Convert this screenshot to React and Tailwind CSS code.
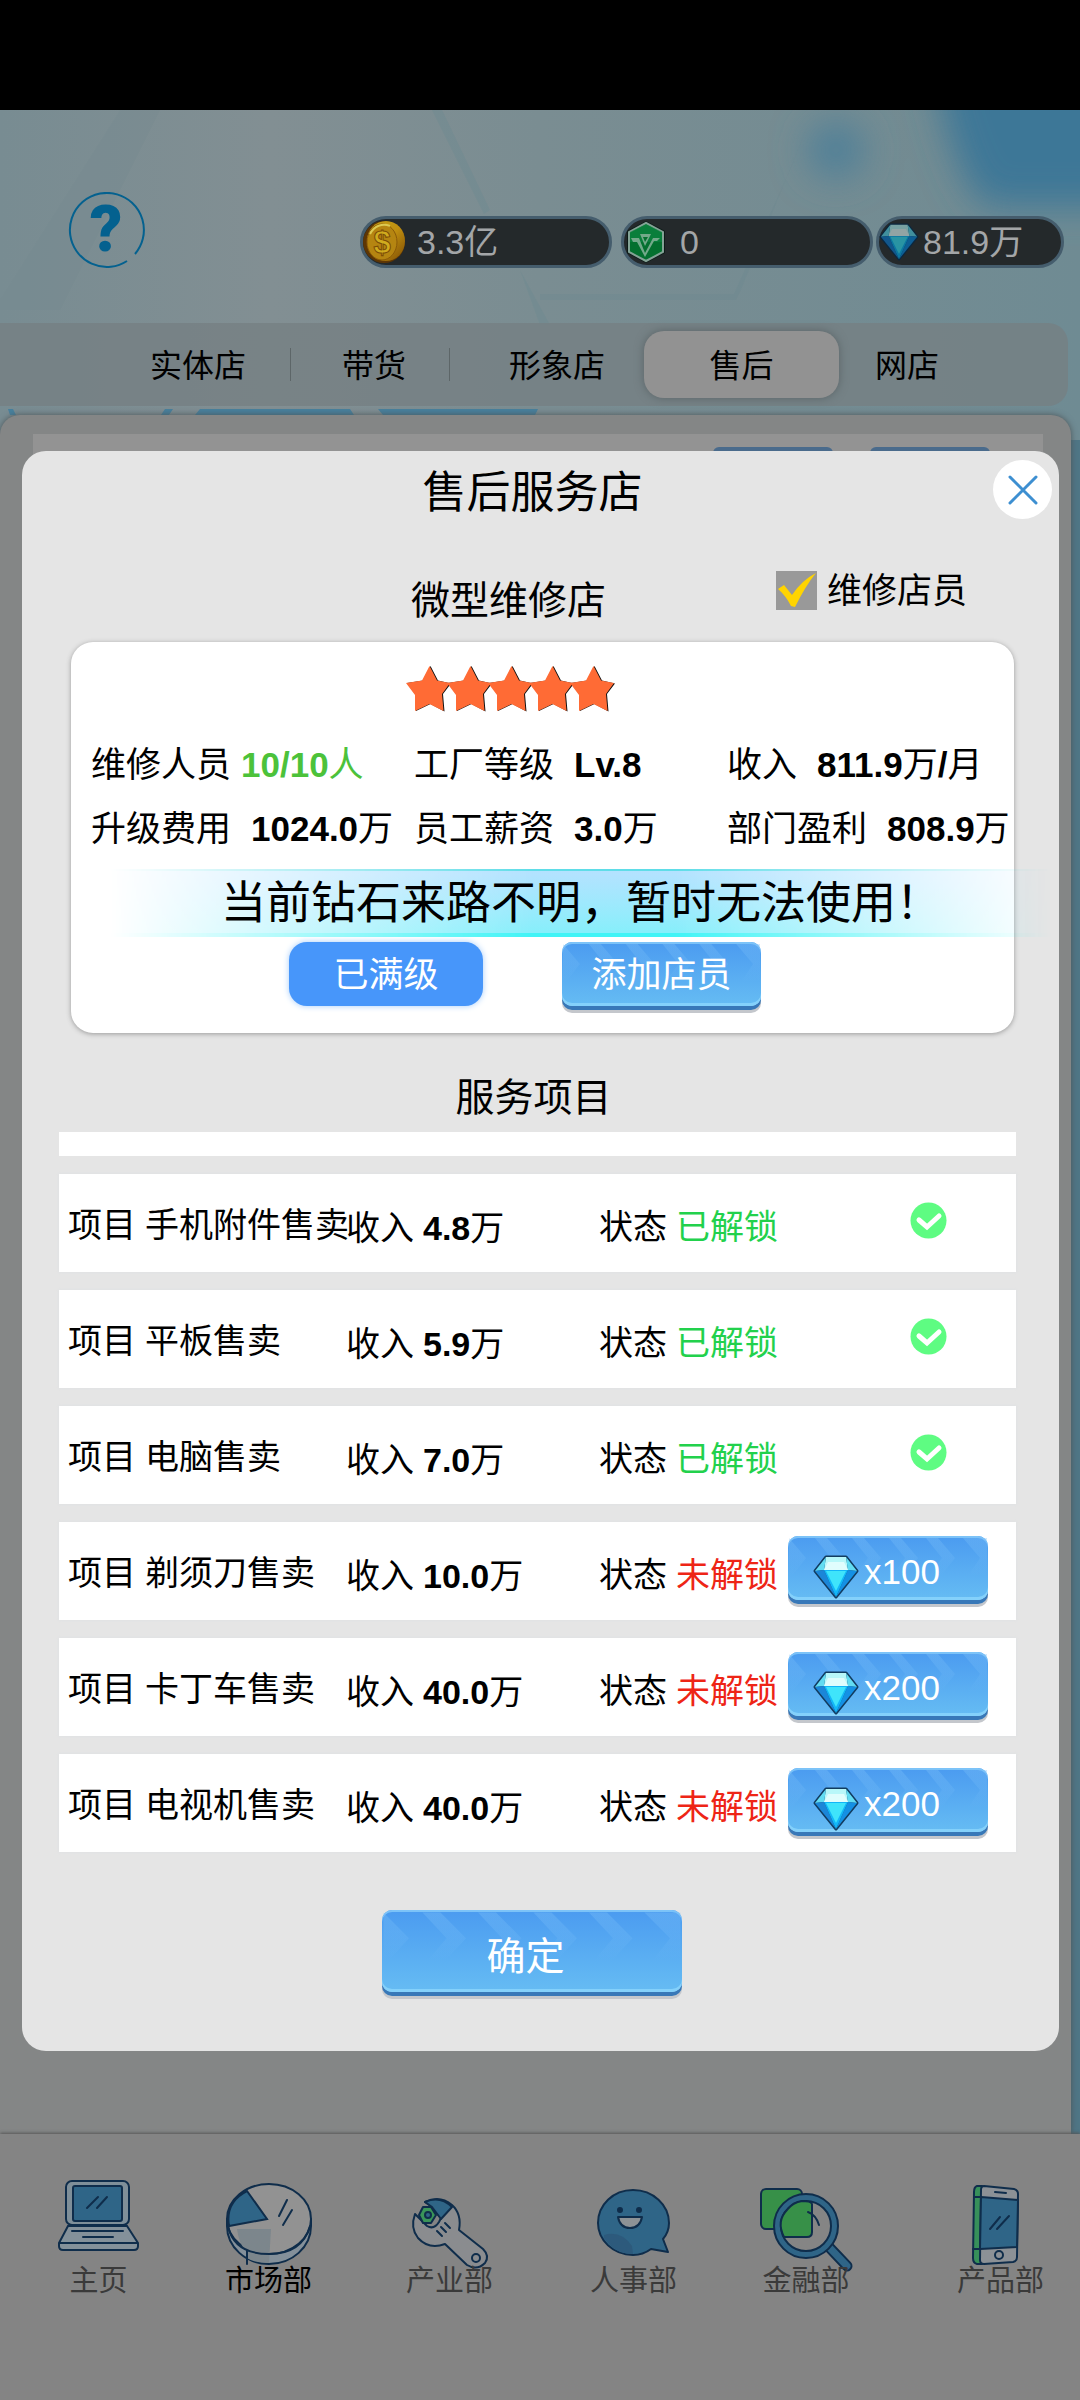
import React, { useState } from 'react'
import clsx from 'clsx'

const tabs = ['实体店', '带货', '形象店', '售后', '网店']

const stats = [
  { label: '维修人员', value: '10/10人', highlight: true },
  { label: '工厂等级', value: 'Lv.8' },
  { label: '收入', value: '811.9万/月' },
  { label: '升级费用', value: '1024.0万' },
  { label: '员工薪资', value: '3.0万' },
  { label: '部门盈利', value: '808.9万' },
]

const projects = [
  { name: '手机附件售卖', income: '4.8万', unlocked: true },
  { name: '平板售卖', income: '5.9万', unlocked: true },
  { name: '电脑售卖', income: '7.0万', unlocked: true },
  { name: '剃须刀售卖', income: '10.0万', cost: 100 },
  { name: '卡丁车售卖', income: '40.0万', cost: 200 },
  { name: '电视机售卖', income: '40.0万', cost: 200 },
]

// Only digits and latin letters are bold, the units stay regular
function Value({ text }) {
  return (
    <span>
      {text.split(/([\w./]+)/).map((part, i) => (
        <span key={i} className={i % 2 ? 'font-bold' : ''}>{part}</span>
      ))}
    </span>
  )
}

function CoinIcon() {
  return (
    <svg className="w-11 h-11 shrink-0" viewBox="0 0 44 44" aria-hidden="true">
      <defs>
        <linearGradient id="coin" x1="0" y1="0" x2="1" y2="1">
          <stop offset="0" stopColor="#c4a416" />
          <stop offset="0.5" stopColor="#c08f10" />
          <stop offset="1" stopColor="#7f4e04" />
        </linearGradient>
      </defs>
      <circle cx="21" cy="22" r="21" fill="#5e3604" />
      <ellipse cx="23" cy="21" rx="19" ry="20" fill="url(#coin)" />
      <ellipse cx="19" cy="22" rx="15" ry="18" fill="#b58511" stroke="#8a5a08" strokeWidth="1" />
      <path d="M7 14 A16 18 0 0 1 27 6" fill="none" stroke="#dcca52" strokeWidth="2" />
      <text x="19" y="33" textAnchor="middle" fontSize="31" fontWeight="bold" fill="#d0ab1e" stroke="#7c4c06" strokeWidth="1">$</text>
    </svg>
  )
}

function BadgeIcon() {
  return (
    <svg className="w-11 h-11 shrink-0" viewBox="0 0 44 44" aria-hidden="true">
      <path d="M22 1 L41 11 V33 L22 43 L3 33 V11 Z" fill="#0d1b18" />
      <path d="M22 3 L39 12 V32 L22 41 L5 32 V12 Z" fill="#04702f" stroke="#84a396" strokeWidth="2" />
      <path d="M22 4 L38 12 V22 H6 V12 Z" fill="#0b8440" opacity="0.7" />
      <path d="M7 18 H15 L21 33 L29 18 H36 L33 21 H30 L21 37 L13 22 H9 Z M16 14 H27 L21 26 Z" fill="#73a98a" />
      <path d="M19 17 H24 L21 22 Z" fill="#04702f" />
    </svg>
  )
}

function DiamondIcon({ className }) {
  return (
    <svg className={clsx('shrink-0 overflow-visible', className)} viewBox="0 0 44 44" aria-hidden="true">
      <path d="M12 2 H32 L43 16 L22 42 L1 16 Z" fill="#0a4a78" stroke="#123c60" strokeWidth="3" strokeLinejoin="round" />
      <path d="M12 2 H32 L34 15 H10 Z" fill="#b8f7f9" />
      <path d="M12 2 L10 15 L1 16 Z M32 2 L34 15 L43 16 Z" fill="#62dcf2" />
      <path d="M1 16 L10 15 L22 42 Z" fill="#1b86d8" />
      <path d="M43 16 L34 15 L22 42 Z" fill="#1590e4" />
      <path d="M10 15 H34 L22 42 Z" fill="#12b6f8" />
      <path d="M12 16 H32 L22 36 Z" fill="#3fe4fb" />
      <path d="M10 15 L14 7 H30 L34 15 Z" fill="#e0fdfd" />
    </svg>
  )
}

function Star() {
  return (
    <svg className="w-[41px] h-[45px] overflow-visible" viewBox="0 0 41 45" aria-hidden="true">
      <path d="M24.5 0 L32 14.5 L45 17.5 L37 28 L38.5 45.5 L24.5 38 L10 45 V29 L1 17 L17 14.5 Z" fill="#111" />
      <path d="M23.5 0 L31 14.5 L44 17 L36 28 L37.5 45 L23.5 38 L9 45 V29 L0 17 L16 14.5 Z" fill="#ff6b35" />
    </svg>
  )
}

// Glossy button with a raised lower edge and faded arrows on its face
function BlueButton({ className, children, ...props }) {
  return (
    <button
      className={clsx(
        'relative overflow-visible rounded-[10px] bg-linear-to-b from-[#4b9bf0] to-[#66bcf3] text-white shadow-[inset_0_2px_0_#7cc3f8,inset_0_-3px_0_#84d1fb,0_4px_0_#3878b8,0_7px_0_#c4c7cc]',
        className
      )}
      {...props}
    >
      <svg className="absolute inset-0 w-full h-full" viewBox="0 0 200 64" preserveAspectRatio="none" aria-hidden="true">
        <defs>
          <linearGradient id="fade" x1="0" y1="0" x2="0" y2="1">
            <stop offset="0" stopColor="#7cc0f8" stopOpacity="0.35" />
            <stop offset="0.5" stopColor="#7cc0f8" stopOpacity="0.2" />
            <stop offset="1" stopColor="#7cc0f8" stopOpacity="0" />
          </linearGradient>
        </defs>
        {[27, 64, 101, 138].map(x => (
          <path key={x} d={`M${x} 2 h12 l17 20 l-14 18 h-12 l13 -18 Z`} fill="url(#fade)" />
        ))}
        <path d="M1 2 L18 22 L4 40 H1 Z M175 2 H199 V40 H180 L192 22 Z" fill="url(#fade)" />
      </svg>
      {children}
    </button>
  )
}

function LaptopIcon() {
  return (
    <svg className="w-[81px] h-[82px] overflow-visible" viewBox="0 0 81 82" fill="none" stroke="#0f2d4b" strokeWidth="2" strokeLinecap="round" aria-hidden="true">
      <rect x="8" y="1" width="63" height="44" rx="6" fill="#7f8f99" />
      <rect x="15" y="6" width="49" height="35" rx="2" fill="#2f6587" />
      <path d="M29 28 L40 17 M39 28 L49 17" />
      <path d="M10 46 H69 L80 63 V66 Q80 70 76 70 H5 Q1 70 1 66 V63 Z" fill="#84919a" />
      <path d="M2 63 H79 M14 51 H65 M25 57 H55" />
    </svg>
  )
}

function PieIcon() {
  return (
    <svg className="w-[86px] h-[82px] overflow-visible" viewBox="0 0 86 82" fill="none" stroke="#0f2d4b" strokeWidth="2" strokeLinecap="round" aria-hidden="true">
      <path d="M1 39 V46 A42 38 0 0 0 85 46 V39" fill="#84909a" />
      <ellipse cx="43" cy="39" rx="42" ry="35" fill="#929292" />
      <path d="M11 49 H45 L43 83 Q28 83 21 78 V72 Q13 65 11 49 Z" fill="#7c868c" stroke="none" />
      <path d="M2 46 Q8 74 43 74 Q76 74 84 46 M21 70 V84" />
      <path d="M21 11 L41 39 L3 46 Q-1 22 21 11 Z" fill="#2f6587" />
      <path d="M61 20 L53 36 M66 30 L57 45" />
    </svg>
  )
}

function WrenchIcon() {
  return (
    <svg className="w-[76px] h-[82px] overflow-visible" viewBox="0 0 76 82" fill="none" stroke="#0f2d4b" strokeWidth="2" strokeLinejoin="round" strokeLinecap="round" aria-hidden="true">
      <path d="M13 22 Q28 15 40 25 Q50 34 47 50 L71 69 Q78 76 73 83 Q65 91 55 85 L33 64 Q17 70 6 58 Q-2 48 3 34 L15 46 Q22 50 27 42 L29 38 L19 26 Z" fill="#8a8c8f" />
      <path d="M13 22 Q28 15 40 27 L29 39 L20 27 Z" fill="#2f6587" />
      <path d="M11 27 L19 27 L24 35 L19 43 L11 43 L7 35 Z" fill="#3a9559" />
      <circle cx="16" cy="35" r="3" fill="#2f6587" />
      <circle cx="64" cy="78" r="4" />
      <path d="M25 51 L30 56 M29 47 L34 52 M33 43 L38 48" />
    </svg>
  )
}

function BubbleIcon() {
  return (
    <svg className="w-[73px] h-[82px] overflow-visible" viewBox="0 0 73 82" fill="none" stroke="#0f2d4b" strokeWidth="2" strokeLinejoin="round" aria-hidden="true">
      <path d="M66 59 L71 72 L54 69 Q46 75 36 75 C16 75 1 60 1 43 C1 25 16 10 36 10 C56 10 72 25 72 43 Q72 52 66 59 Z" fill="#2f6587" />
      <path d="M7 55 Q24 50 35 66 L36 74 Q18 74 7 58 Z" fill="#2d5a7c" stroke="none" />
      <circle cx="23" cy="30" r="2" fill="#0f2d4b" />
      <circle cx="42" cy="30" r="2" fill="#0f2d4b" />
      <path d="M21 37 H45 Q43 48 33 48 Q23 48 21 37 Z" fill="#8d9296" />
    </svg>
  )
}

function MagnifierIcon() {
  return (
    <svg className="w-[92px] h-[82px] overflow-visible" viewBox="0 0 92 82" fill="none" stroke="#0f2d4b" strokeWidth="2" strokeLinecap="round" aria-hidden="true">
      <rect x="1" y="9" width="41" height="40" rx="5" fill="#379048" />
      <path d="M69 67 L87 86" stroke="#0f2d4b" strokeWidth="11" />
      <path d="M68 66 L87 86" stroke="#2f6587" strokeWidth="7" />
      <circle cx="46" cy="46" r="32" fill="#2f6587" />
      <circle cx="46" cy="46" r="25" fill="#858585" />
      <path d="M42 21 Q51 21 52 24 V52 Q52 57 47 57 H24 Q16 41 27 30 Q33 22 42 21 Z" fill="#379048" />
      <path d="M48 32 Q56 35 59 45" />
    </svg>
  )
}

function PhoneIcon() {
  return (
    <svg className="w-[47px] h-[82px] overflow-visible" viewBox="5 0 47 82" fill="none" stroke="#0f2d4b" strokeWidth="2" strokeLinejoin="round" strokeLinecap="round" aria-hidden="true">
      <path d="M10 6 H5 Q2 7 2 12 L1 78 Q1 83 5 84 H10 Z" fill="#37905a" />
      <path d="M12 6 L42 9 Q46 10 46 14 L45 77 Q45 81 41 82 L12 84 Q8 84 8 80 L9 10 Q9 6 12 6 Z" fill="#8c9196" />
      <path d="M9 17 L46 20 L45 67 L8 69 Z" fill="#2f6587" />
      <path d="M2 17 H9 M1 69 H8 M23 12 L34 13 M18 49 L28 37 M25 49 L37 36" />
      <circle cx="27" cy="75" r="4" />
    </svg>
  )
}

const navItems = [
  { label: '主页', Icon: LaptopIcon },
  { label: '市场部', Icon: PieIcon },
  { label: '产业部', Icon: WrenchIcon },
  { label: '人事部', Icon: BubbleIcon },
  { label: '金融部', Icon: MagnifierIcon },
  { label: '产品部', Icon: PhoneIcon },
]

function Backdrop() {
  return (
    <svg className="absolute inset-0 w-full h-full" viewBox="0 0 1080 2290" preserveAspectRatio="none" aria-hidden="true">
      <defs>
        <linearGradient id="sky" x1="0" y1="0" x2="1" y2="0">
          <stop offset="0" stopColor="#788c92" />
          <stop offset="0.25" stopColor="#828f93" />
          <stop offset="0.5" stopColor="#7a8d92" />
          <stop offset="1" stopColor="#6f8b93" />
        </linearGradient>
        <filter id="soft" x="-50%" y="-50%" width="200%" height="200%">
          <feGaussianBlur stdDeviation="18" />
        </filter>
      </defs>
      <rect width="1080" height="2290" fill="url(#sky)" />
      <path d="M120 0 H160 L60 200 H0 V190 Z" fill="#758a90" opacity="0.35" />
      <path d="M432 0 L442 0 L490 100 L484 104 Z M520 160 L550 215 L540 215 Z" fill="#6c8992" opacity="0.4" />
      <path d="M806 20 L740 182 L736 190 H540 V184 H734 L790 60 Z" fill="#6b888f" opacity="0.3" />
      <g filter="url(#soft)">
        <path d="M930 -60 H1140 V96 H985 Q950 60 930 -60 Z" fill="#3d7797" />
        <circle cx="836" cy="40" r="28" fill="#4d7f98" />
      </g>
      <path d="M8 299 h5 l3 6 h-6 Z M165 299 h8 l-4 6 h-8 Z M200 299 H350 l4 6 H195 Z M378 299 H538 l-3 6 H383 Z" fill="#47809d" />
      <rect x="1060" y="330" width="20" height="1700" fill="#4f7686" />
    </svg>
  )
}

function Pill({ icon, text, className }) {
  return (
    <div className={clsx('flex items-center h-[52px] rounded-full border-[3px] border-[#455d6d] bg-[#24292b] text-[34px] text-[#a3a6a8]', className)}>
      {icon}
      {text}
    </div>
  )
}

function App() {
  const [activeTab, setActiveTab] = useState('售后')
  const [activeNav, setActiveNav] = useState('市场部')
  const [clerk, setClerk] = useState(true)
  const [open, setOpen] = useState(true)

  return (
    <div className="min-h-screen flex flex-col bg-black pt-[110px] font-['Liberation_Sans','Noto_Sans_CJK_SC',sans-serif] text-black whitespace-nowrap">
      <div className="relative flex-1 flex flex-col overflow-hidden">
        <Backdrop />

        <header className="relative flex items-end pt-[82px] pb-[55px] pl-[67px] pr-4">
          <button aria-label="帮助" className="relative flex items-center justify-center w-[78px] h-[76px] font-['Roboto'] font-black text-[64px] leading-none text-[#04618f]">
            <svg className="absolute inset-0 w-full h-full" viewBox="0 0 78 76" fill="none" stroke="#04618f" strokeWidth="2" aria-hidden="true">
              <path d="M60 69 A37 37 0 1 1 68 62" />
            </svg>
            ?
          </button>
          <Pill icon={<CoinIcon />} text="3.3亿" className="ml-auto mr-[9px] w-[252px] gap-2.5" />
          <Pill icon={<BadgeIcon />} text="0" className="mr-[3px] w-[252px] gap-3" />
          <Pill icon={<DiamondIcon className="w-10 h-[38px] brightness-65" />} text="81.9万" className="w-[188px] gap-1" />
        </header>

        {/* Shop tabs */}
        <nav className="relative grid grid-cols-[106fr_185fr_159fr_194fr_195fr_136fr_93fr] items-center h-[83px] mr-3 rounded-r-[20px] bg-[#758083]/80 text-[32px]">
          <span />
          {tabs.map(tab => (
            <button
              key={tab}
              onClick={() => setActiveTab(tab)}
              className={clsx(
                'relative pt-0.5',
                tab === activeTab && 'h-[67px] rounded-[20px] bg-[#929292] shadow-[0_0_10px_#5a6366]',
                tab === '实体店' && 'h-[33px] leading-[33px] border-r border-[#5d6668]',
                tab === '带货' && 'h-[33px] leading-[33px] border-r border-[#5d6668] pl-2',
                tab === '形象店' && 'pl-5'
              )}
            >
              {tab}
            </button>
          ))}
        </nav>

        {/* Shop list behind the dialog */}
        <main className="relative flex-1 mt-[9px] mr-[9px] rounded-t-[20px] bg-[#848686] shadow-[0_0_6px_#4d5558] pt-[19px] pl-[33px] pr-7">
          <div className="flex justify-end gap-[37px] h-[400px] pt-[13px] pr-[53px] bg-[#939393]">
            <div className="w-[120px] h-12 rounded-md bg-[#4a6b8c]" />
            <div className="w-[120px] h-12 rounded-md bg-[#4a6b8c]" />
          </div>
        </main>

        <nav className="relative grid grid-cols-[167fr_181fr_184fr_170fr_197fr_123fr] items-start justify-items-start h-[266px] pt-[46px] pl-[58px] bg-[#848484] shadow-[0_-1px_3px_#555]">
          {navItems.map(({ label, Icon }) => (
            <button
              key={label}
              onClick={() => setActiveNav(label)}
              className={clsx('flex flex-col items-center text-[29px] leading-[38px]', label === activeNav ? 'text-black' : 'text-[#3a3a3a]')}
            >
              <Icon />
              <span>{label}</span>
            </button>
          ))}
        </nav>

        {open && (
          <div role="dialog" aria-label="售后服务店" className="absolute top-[341px] left-[22px] right-[21px] rounded-[24px] bg-[#e5e5e5] pb-[59px]">
            <h1 className="pr-4 text-center text-[44px] leading-[84px]">售后服务店</h1>
            <button
              aria-label="关闭"
              onClick={() => setOpen(false)}
              className="absolute top-[9px] right-[7px] flex items-center justify-center w-[59px] h-[59px] rounded-full bg-white"
            >
              <svg className="w-[30px] h-[30px]" viewBox="0 0 30 30" stroke="#3d8fd1" strokeWidth="3" strokeLinecap="round" aria-hidden="true">
                <path d="M2 2 L28 28 M28 2 L2 28" />
              </svg>
            </button>

            <div className="flex items-start justify-between pt-9 pb-[11px] pl-[389px] pr-[92px]">
              <h2 className="text-[39px] leading-[60px]">微型维修店</h2>
              <label className="relative flex items-center gap-2.5 text-[35px] leading-[39px]">
                <input
                  type="checkbox"
                  checked={clerk}
                  onChange={e => setClerk(e.target.checked)}
                  className="appearance-none w-[41px] h-[39px] bg-[#999]"
                />
                {clerk && (
                  <svg className="absolute left-0 top-0 w-[41px] h-[39px] pointer-events-none" viewBox="0 0 41 39" aria-hidden="true">
                    <path d="M2 18 L8 14 L16 24 Q26 9 40 2 Q30 14 19 36 L15 35 Q10 25 2 18 Z" fill="#ffd400" />
                  </svg>
                )}
                维修店员
              </label>
            </div>

            <section className="relative ml-[49px] mr-[45px] pt-6 pb-[27px] rounded-[22px] bg-white shadow-[0_1px_5px_#999]">
              <div className="flex pl-[335px]">
                {[1, 2, 3, 4, 5].map(n => <Star key={n} />)}
              </div>
              <dl className="grid grid-cols-[323fr_313fr_287fr] mt-[22px] pl-5 text-[35px] leading-[64px]">
                {stats.map(s => (
                  <div key={s.label} className={clsx('flex', s.highlight ? 'gap-2.5' : 'gap-5')}>
                    <dt>{s.label}</dt>
                    <dd className={s.highlight ? 'text-[#4cc23a]' : ''}>
                      <Value text={s.value} />
                    </dd>
                  </div>
                ))}
              </dl>
              <div className="flex gap-[79px] mt-[81px] pl-[218px] text-[35px]">
                <button className="w-[194px] h-16 pt-0.5 rounded-[18px] bg-[#4796fa] text-white shadow-[0_0_6px_#a5cdfb]">已满级</button>
                <BlueButton className="w-[199px] h-16 pt-0.5"><span className="relative">添加店员</span></BlueButton>
              </div>

              {/* Notice, wider than the card */}
              <div role="status" className="absolute top-[227px] left-[39px] -right-[38px] h-[68px] text-center text-[45px] leading-[70px]">
                <div className="absolute inset-0 bg-linear-to-b from-[#b4e2ff] to-[#86effb] border-t-2 border-t-[#5fdde8] border-b-4 border-b-[#41f4f6] mask-[linear-gradient(to_right,transparent,#000_45%,#000_60%,transparent)]" />
                <span className="relative">当前钻石来路不明，暂时无法使用！</span>
              </div>
            </section>

            <h2 className="pt-[31px] pr-3.5 text-center text-[39px] leading-[68px]">服务项目</h2>

            <ul className="flex flex-col gap-[18px] ml-[37px] mr-[43px] text-[34px]">
              <li className="h-6 bg-white" />
              {projects.map(p => (
                <li key={p.name} className="grid grid-cols-[278fr_253fr_189fr_228fr] items-center h-[98px] pt-0.5 pl-[9px] bg-white shadow-[0_0_3px_#dde0e3]">
                  <div className="flex gap-[9px] min-w-0 pt-0.5">
                    <span>项目</span>
                    <span>{p.name}</span>
                  </div>
                  <div className="flex gap-[9px] min-w-0 pt-2">
                    <span>收入</span>
                    <Value text={p.income} />
                  </div>
                  <div className="flex gap-[9px] min-w-0 pt-1.5">
                    <span>状态</span>
                    <span className={p.unlocked ? 'text-[#22d14c]' : 'text-[#ee2516]'}>{p.unlocked ? '已解锁' : '未解锁'}</span>
                  </div>
                  <div className="min-w-0 pb-2">
                    {p.unlocked ? (
                      <svg className="ml-[122px] w-[37px] h-[37px]" viewBox="0 0 37 37" aria-label="已解锁">
                        <circle cx="18.5" cy="18.5" r="18" fill="#5efc82" />
                        <path d="M9 18 L17 25 L29 14" fill="none" stroke="#fff" strokeWidth="5" strokeLinecap="round" />
                      </svg>
                    ) : (
                      <BlueButton className="flex items-center w-[200px] h-16 pl-[26px] pt-2 gap-1.5 text-[35px]">
                        <DiamondIcon className="relative mt-2.5 w-11 h-11" />
                        <span className="relative">x{p.cost}</span>
                      </BlueButton>
                    )}
                  </div>
                </li>
              ))}
            </ul>

            <div className="flex justify-center mt-[58px] pr-[18px]">
              <BlueButton className="w-[300px] h-[82px] pr-3 pt-3 text-[39px]" onClick={() => setOpen(false)}>
                <span className="relative">确定</span>
              </BlueButton>
            </div>
          </div>
        )}
      </div>
    </div>
  )
}

export default App
